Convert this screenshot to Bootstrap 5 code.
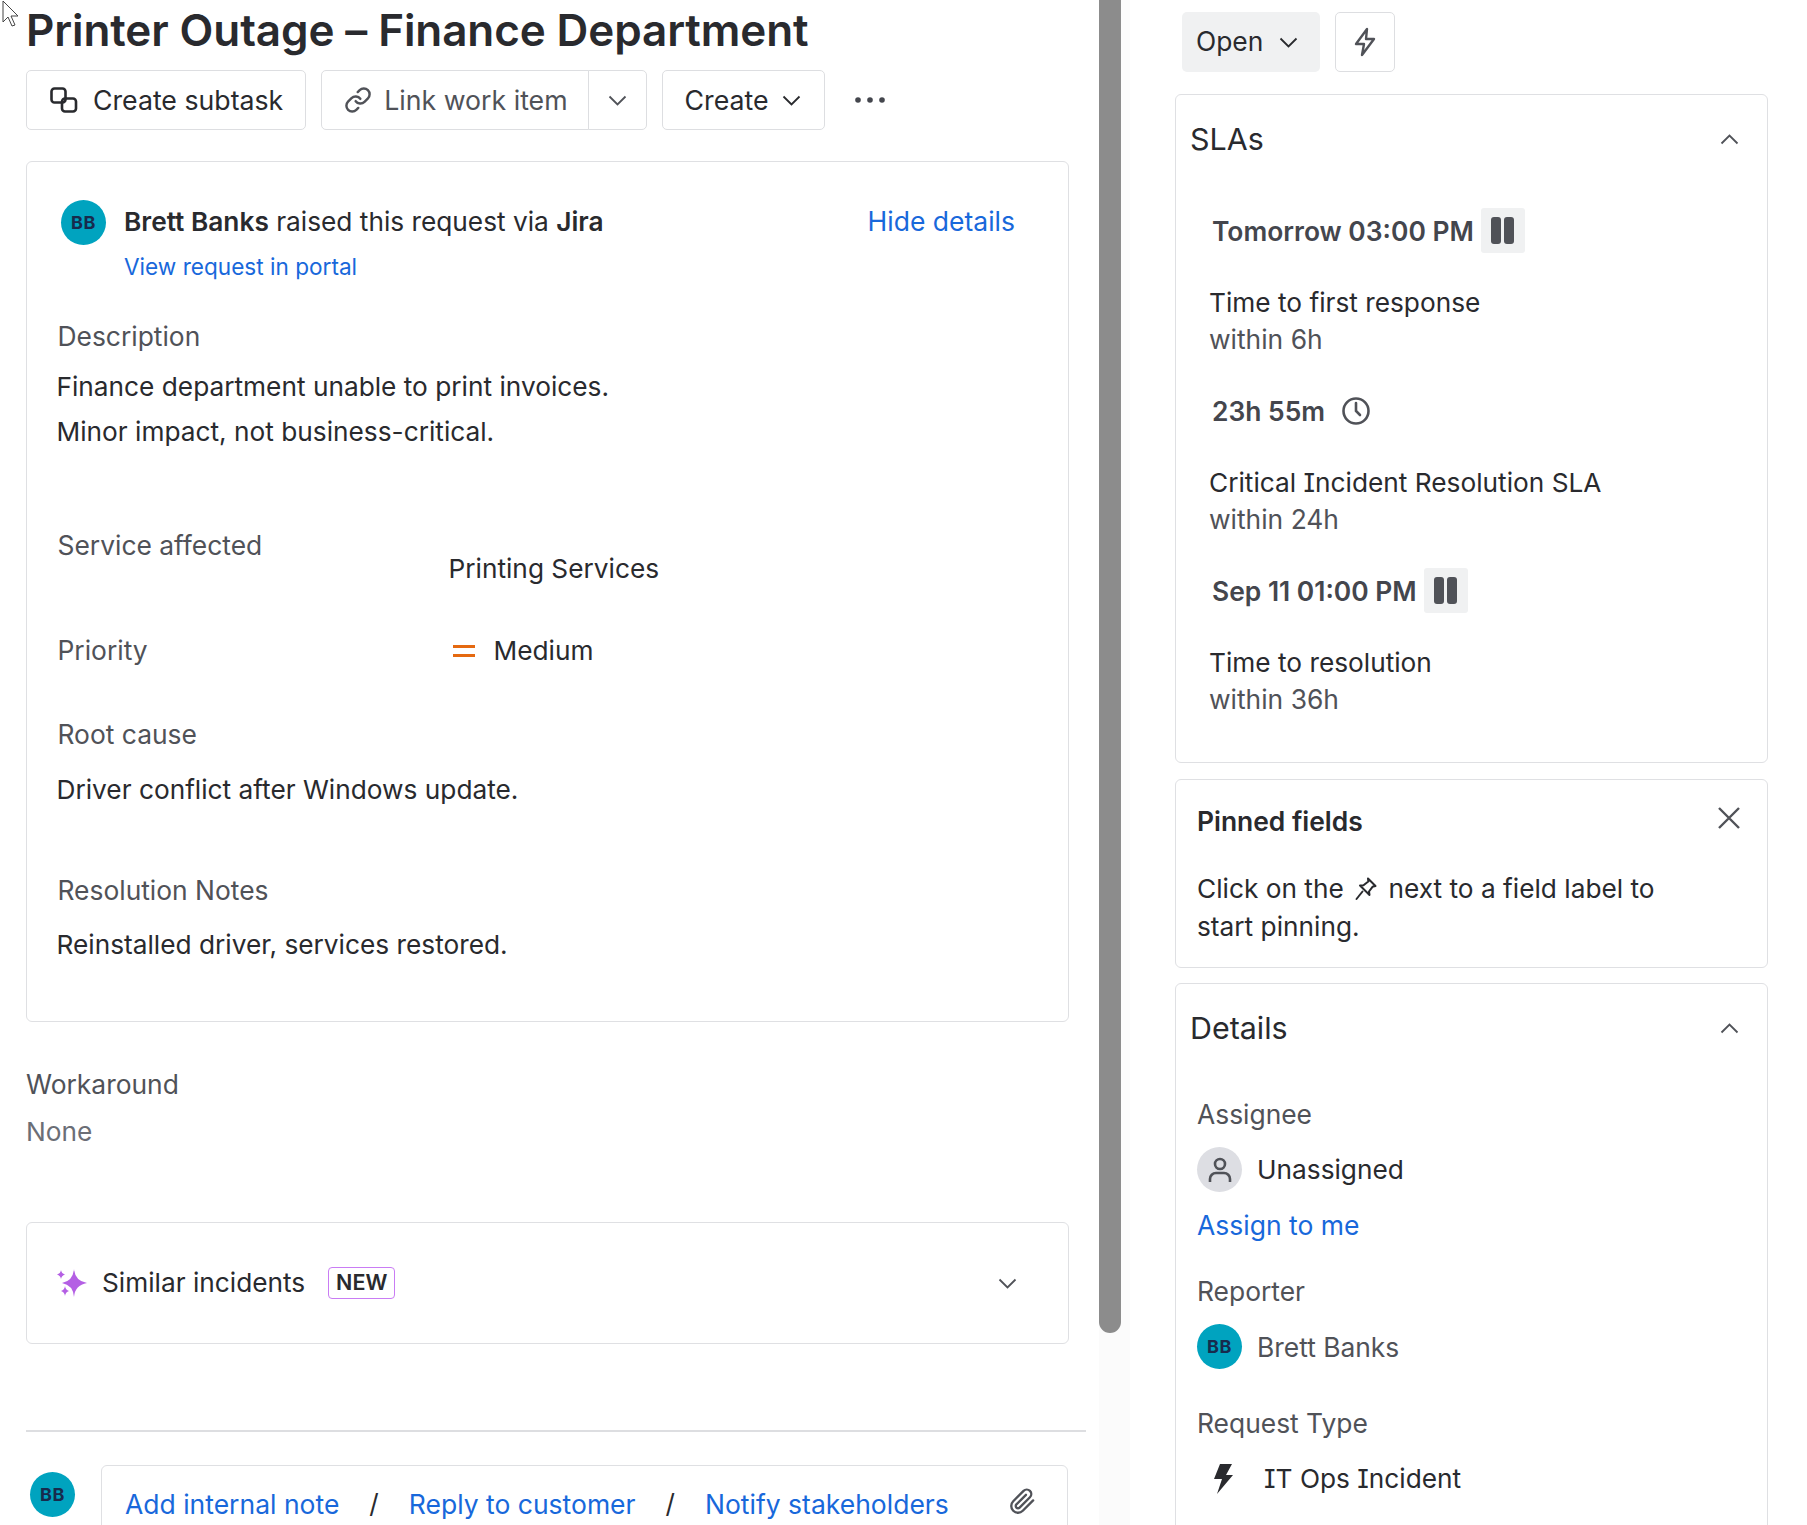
<!DOCTYPE html>
<html lang="en"><head><meta charset="utf-8"><title>Printer Outage</title>
<link href="https://cdn.jsdelivr.net/npm/bootstrap@5.3.0/dist/css/bootstrap.min.css" rel="stylesheet">
<style>
html,body{height:1525px;overflow:hidden;background:#fff}
body{font-family:Inter,"Liberation Sans",sans-serif;font-size:26.25px;line-height:36px;color:#292a2e;font-feature-settings:"cv08"}
a{color:#1868db;text-decoration:none;font-size:26.5px}
.shell{height:1525px;overflow:hidden}
.pane-main{width:1099px;flex:none;padding-left:26px}
.thumb-col{width:31px;flex:none;background:#fbfbfb}
.thumb{width:22px;height:1333px;background:#8c8c8c;border-radius:0 0 11px 11px}
.pane-side{width:593px;flex:none;margin-left:45px;padding-top:12px}
.ttl{font-size:44px;font-weight:600;line-height:60px;margin:0 0 10px 0;color:#292a2e;letter-spacing:-.1px}
.tbtn{height:60px;border:1.5px solid #dddee1;border-radius:5px;background:#fff;color:#292a2e;font-size:26.7px;line-height:36px;padding:0 22px;display:inline-flex;align-items:center;white-space:nowrap}
.tbtn:hover{border-color:#dddee1}
.mute-txt{color:#505258}
.subb{padding-left:23px}
.linkb{padding-right:20px}
.caretb{width:59px;padding:0;justify-content:center}
.createb{padding-left:22px;padding-right:23px}
.ms13{margin-left:13px}
.ms14{margin-left:14px}
.me12{margin-right:12px}
.me15{margin-right:15px}
.tools{gap:15px;margin-bottom:31px}
.panel{border:1.5px solid #dfe0e3;border-radius:6px;background:#fff}
.req{width:1043px;height:861px;padding:38px 0 0 34px}
.ava{width:45px;height:45px;border-radius:50%;background:#00a3bf;color:#172b4d;font-size:18px;font-weight:700;flex:none;letter-spacing:.5px}
.who{margin-left:18px;margin-top:0}
.who-a{line-height:43px;height:46px}
.who a{font-size:22.6px;line-height:42px}
.lbl{color:#505258;font-size:26.4px}
.hide-l{margin-left:auto;margin-right:53px;line-height:43px}
.req-body{margin-left:-3.500px}
.val-x{margin-left:-1px}
.m30{margin-top:30px}
.para{line-height:45px;margin-top:10px}
.gridrow{display:grid;grid-template-columns:391px 1fr}
.m73{margin-top:73px}
.m45{margin-top:45px}
.m47{margin-top:47px}
.m20{margin-top:20px}
.m64{margin-top:64px}
.m19{margin-top:19px}
.m24{margin-top:24px}
.m36{margin-top:36px}
.pri-i{margin:0 19px 0 4px}
.pri-v{padding-top:1px}
.wk{margin-top:44px}
.none-t{margin-top:12px;color:#6b6e76}
.sim{width:1043px;height:122px;margin-top:72px;padding:0 51px 0 30px}
.newb{height:32px;width:67px;border:1.5px solid #c97cf4;border-radius:4px;font-size:21.5px;font-weight:600;line-height:1;margin-left:23px}
.rule{height:2px;width:1060px;background:#dddee1;margin-top:86px}
.bot{margin-top:33px}
.ava-b{margin:7px 0 0 4px}
.edit{width:967px;height:90px;margin-left:26px;padding:20px 31px 0 23px;border-radius:6px 6px 0 0}
.sl{margin:0 30px;color:#292a2e}
.clip{margin-top:2px}
.open-b{width:138px;height:60px;background:#f0f1f2;border:0;border-radius:5px;margin-left:7px;padding:0 22px 0 14px;color:#292a2e;font-size:26.4px}
.bolt-b{width:60px;height:60px;margin-left:15px;padding:0;justify-content:center}
.topr{margin-bottom:22px}
.sla{height:669px;padding:26px 28px 0 14px}
.hd{font-size:30.4px;line-height:36px;color:#292a2e}
.tm{height:45px;font-weight:600;color:#44464d;margin-left:22px;font-size:26.4px}
.desc{margin-left:19px;margin-top:31px;line-height:37px}
.tm2{margin-top:30px}
.first{margin-top:51px}
.pz{width:44px;height:45px;background:#f0f1f2;border-radius:3px;margin-left:7px;gap:3px}
.pz i{display:block;width:10px;height:27px;background:#505258;border-radius:3px}
.pin{height:189px;margin-top:16px;padding:23px 26px 0 21px}
.pin-h{font-weight:600;color:#292a2e;font-size:26.4px}
.pin-x{margin-top:3px}
.pin-t{margin-top:31px;line-height:37.5px}
.pin-g{vertical-align:-3px;margin:0 4px}
.det{height:700px;margin-top:15px;padding:26px 28px 0 14px}
.f{margin-left:7px}
.m50{margin-top:50px}.m15{margin-top:15px}
.u-ava{width:45px;height:45px;border-radius:50%;background:#dddee3;flex:none}
.gap15{gap:15px}
.it-i{margin:0 31px 0 16px}
.cursor-mark{position:absolute;left:2px;top:0}
</style></head><body>
<svg class="cursor-mark" width="20" height="28" viewBox="0 0 20 28"><path d="M1 1v21l5-5 4 9 3-1-4-9h7z" fill="#fff" stroke="#444" stroke-width="1"/></svg>
<div class="shell d-flex">
 <div class="pane-main">
  <h1 class="ttl">Printer Outage – Finance Department</h1>
  <div class="d-flex align-items-center tools">
   <button class="btn tbtn subb"><svg class="me15" width="28" height="26" viewBox="0 0 28 26" fill="none" stroke="#292a2e" stroke-width="2.6"><rect x="1.500" y="1.500" width="14" height="14" rx="3"/><rect x="12" y="11.500" width="14" height="13" rx="3"/></svg>Create subtask</button>
   <div class="btn-group">
    <button class="btn tbtn mute-txt linkb"><svg class="me12" width="28" height="28" viewBox="0 0 24 24" fill="none" stroke="#505258" stroke-width="2.100" stroke-linecap="round" stroke-linejoin="round"><path d="M10 13a5 5 0 0 0 7.540.54l3-3a5 5 0 0 0-7.070-7.070l-1.720 1.710"/><path d="M14 11a5 5 0 0 0-7.540-.54l-3 3a5 5 0 0 0 7.070 7.070l1.710-1.710"/></svg>Link work item</button>
    <button class="btn tbtn caretb"><svg width="19" height="11" viewBox="0 0 19 11" fill="none" stroke="#505258" stroke-width="1.8"><path d="M1.500 1.500l8 8 8-8"/></svg></button>
   </div>
   <button class="btn tbtn createb">Create<svg class="ms13" width="19" height="11" viewBox="0 0 19 11" fill="none" stroke="#292a2e" stroke-width="1.8"><path d="M1.500 1.500l8 8 8-8"/></svg></button>
   <svg class="ms14" width="32" height="8" viewBox="0 0 32 8" fill="#44464d"><circle cx="4" cy="4" r="2.8"/><circle cx="16" cy="4" r="2.8"/><circle cx="28" cy="4" r="2.8"/></svg>
  </div>
  <div class="panel req">
   <div class="d-flex">
    <div class="ava d-flex align-items-center justify-content-center">BB</div>
    <div class="who"><div class="who-a"><b class="fw-semibold">Brett Banks</b> raised this request via <b class="fw-semibold">Jira</b></div><a class="d-block" href="#">View request in portal</a></div>
    <a class="hide-l" href="#">Hide details</a>
   </div>
   <div class="req-body">
   <div class="lbl m30">Description</div>
   <div class="para val-x">Finance department unable to print invoices.<br>Minor impact, not business-critical.</div>
   <div class="gridrow m73"><div class="lbl">Service affected</div><div class="m24">Printing Services</div></div>
   <div class="gridrow m45"><div class="lbl">Priority</div><div class="d-flex align-items-center pri-v"><svg width="22" height="12" viewBox="0 0 22 12" fill="#e56910" class="pri-i"><rect y="0" width="22" height="3"/><rect y="9" width="22" height="3"/></svg>Medium</div></div>
   <div class="lbl m47">Root cause</div>
   <div class="m20 val-x">Driver conflict after Windows update.</div>
   <div class="lbl m64">Resolution Notes</div>
   <div class="m19 val-x">Reinstalled driver, services restored.</div>
   </div>
  </div>
  <div class="lbl wk">Workaround</div>
  <div class="none-t">None</div>
  <div class="panel sim d-flex align-items-center">
   <svg class="me15" width="30" height="28" viewBox="0 0 30 28" fill="#b45fe4"><path d="M17 0Q18 12 30 14 18 16 17 28 16 16 5 14 16 12 17 0z"/><path d="M4 1Q4.500 4.500 8 5.500 4.500 6.500 4 10 3.500 6.500 0 5.500 3.500 4.500 4 1z"/><path d="M8 17Q8.500 21 12 22 8.500 23 8 27 7.500 23 4 22 7.500 21 8 17z"/></svg>
   <span>Similar incidents</span>
   <span class="newb d-inline-flex align-items-center justify-content-center">NEW</span>
   <svg class="ms-auto" width="19" height="11" viewBox="0 0 19 11" fill="none" stroke="#505258" stroke-width="1.8"><path d="M1.500 1.500l8 8 8-8"/></svg>
  </div>
  <div class="rule"></div>
  <div class="bot d-flex">
   <div class="ava ava-b d-flex align-items-center justify-content-center">BB</div>
   <div class="panel edit d-flex align-items-start">
    <a href="#">Add internal note</a><span class="sl">/</span><a href="#">Reply to customer</a><span class="sl">/</span><a href="#">Notify stakeholders</a>
    <svg class="ms-auto clip" width="27" height="27" viewBox="0 0 24 24" fill="none" stroke="#505258" stroke-width="2.100" stroke-linecap="round" stroke-linejoin="round"><path d="M21.440 11.050l-9.190 9.190a6 6 0 0 1-8.490-8.490l9.190-9.190a4 4 0 0 1 5.660 5.660l-9.200 9.190a2 2 0 0 1-2.830-2.830l8.490-8.480"/></svg>
   </div>
  </div>
 </div>
 <div class="thumb-col"><div class="thumb"></div></div>
 <div class="pane-side">
  <div class="d-flex topr">
   <button class="btn open-b d-flex align-items-center justify-content-between">Open<svg width="19" height="11" viewBox="0 0 19 11" fill="none" stroke="#292a2e" stroke-width="1.8"><path d="M1.500 1.500l8 8 8-8"/></svg></button>
   <button class="btn tbtn bolt-b"><svg width="24" height="30" viewBox="0 0 24 30" fill="none" stroke="#505258" stroke-width="2.4" stroke-linejoin="round"><path d="M14 2L3 17h8l-2 11 12-16h-8z"/></svg></button>
  </div>
  <div class="panel sla">
   <div class="d-flex align-items-center justify-content-between"><span class="hd">SLAs</span><svg width="19" height="11" viewBox="0 0 19 11" fill="none" stroke="#505258" stroke-width="1.8"><path d="M1.500 9.500l8-8 8 8"/></svg></div>
   <div class="tm first d-flex align-items-center">Tomorrow 03:00 PM<span class="pz d-flex align-items-center justify-content-center"><i></i><i></i></span></div>
   <div class="desc">Time to first response<br><span class="lbl">within 6h</span></div>
   <div class="tm tm2 d-flex align-items-center">23h 55m<svg class="ms-3" width="30" height="30" viewBox="0 0 30 30" fill="none" stroke="#505258" stroke-width="2.6" stroke-linecap="round"><circle cx="15" cy="15" r="12.500"/><path d="M15 7v8l4 4"/></svg></div>
   <div class="desc">Critical Incident Resolution SLA<br><span class="lbl">within 24h</span></div>
   <div class="tm tm2 d-flex align-items-center">Sep 11 01:00 PM<span class="pz d-flex align-items-center justify-content-center"><i></i><i></i></span></div>
   <div class="desc">Time to resolution<br><span class="lbl">within 36h</span></div>
  </div>
  <div class="panel pin">
   <div class="d-flex justify-content-between align-items-start"><span class="pin-h">Pinned fields</span><svg class="pin-x" width="24" height="24" viewBox="0 0 24 24" fill="none" stroke="#505258" stroke-width="2.400"><path d="M2 2l20 20M22 2L2 22"/></svg></div>
   <div class="pin-t">Click on the <svg class="pin-g" width="22" height="24" viewBox="0 0 22 24" fill="none" stroke="#292a2e" stroke-width="2" stroke-linejoin="round" stroke-linecap="round"><path d="M13 1.500l7.500 7.500-3 .8-3.500 4.700.5 3.500-9.500-9.500 3.500-.3 4.800-3.700z"/><path d="M7.500 14.500L1.500 22"/></svg> next to a field label to<br>start pinning.</div>
  </div>
  <div class="panel det">
   <div class="d-flex align-items-center justify-content-between"><span class="hd">Details</span><svg width="19" height="11" viewBox="0 0 19 11" fill="none" stroke="#505258" stroke-width="1.8"><path d="M1.500 9.500l8-8 8 8"/></svg></div>
   <div class="f lbl m50">Assignee</div>
   <div class="f m15 d-flex align-items-center gap15"><span class="u-ava d-flex align-items-center justify-content-center"><svg width="26" height="30" viewBox="0 0 26 30" fill="none" stroke="#505258" stroke-width="2.6"><circle cx="13" cy="9" r="5"/><path d="M3 27v-3a6 6 0 0 1 6-6h8a6 6 0 0 1 6 6v3"/></svg></span><span>Unassigned</span></div>
   <a class="f d-block m15" href="#">Assign to me</a>
   <div class="f lbl m30">Reporter</div>
   <div class="f m15 d-flex align-items-center gap15 lbl"><span class="ava d-flex align-items-center justify-content-center">BB</span>Brett Banks</div>
   <div class="f lbl m36">Request Type</div>
   <div class="f m20 d-flex align-items-center"><svg class="it-i" width="20" height="32" viewBox="0 0 20 32" fill="#292a2e"><path d="M7 1h12l-6 11h7L4 31l5-15H1z"/></svg><span class="it-t">IT Ops Incident</span></div>
  </div>
 </div>
</div>
</body></html>
